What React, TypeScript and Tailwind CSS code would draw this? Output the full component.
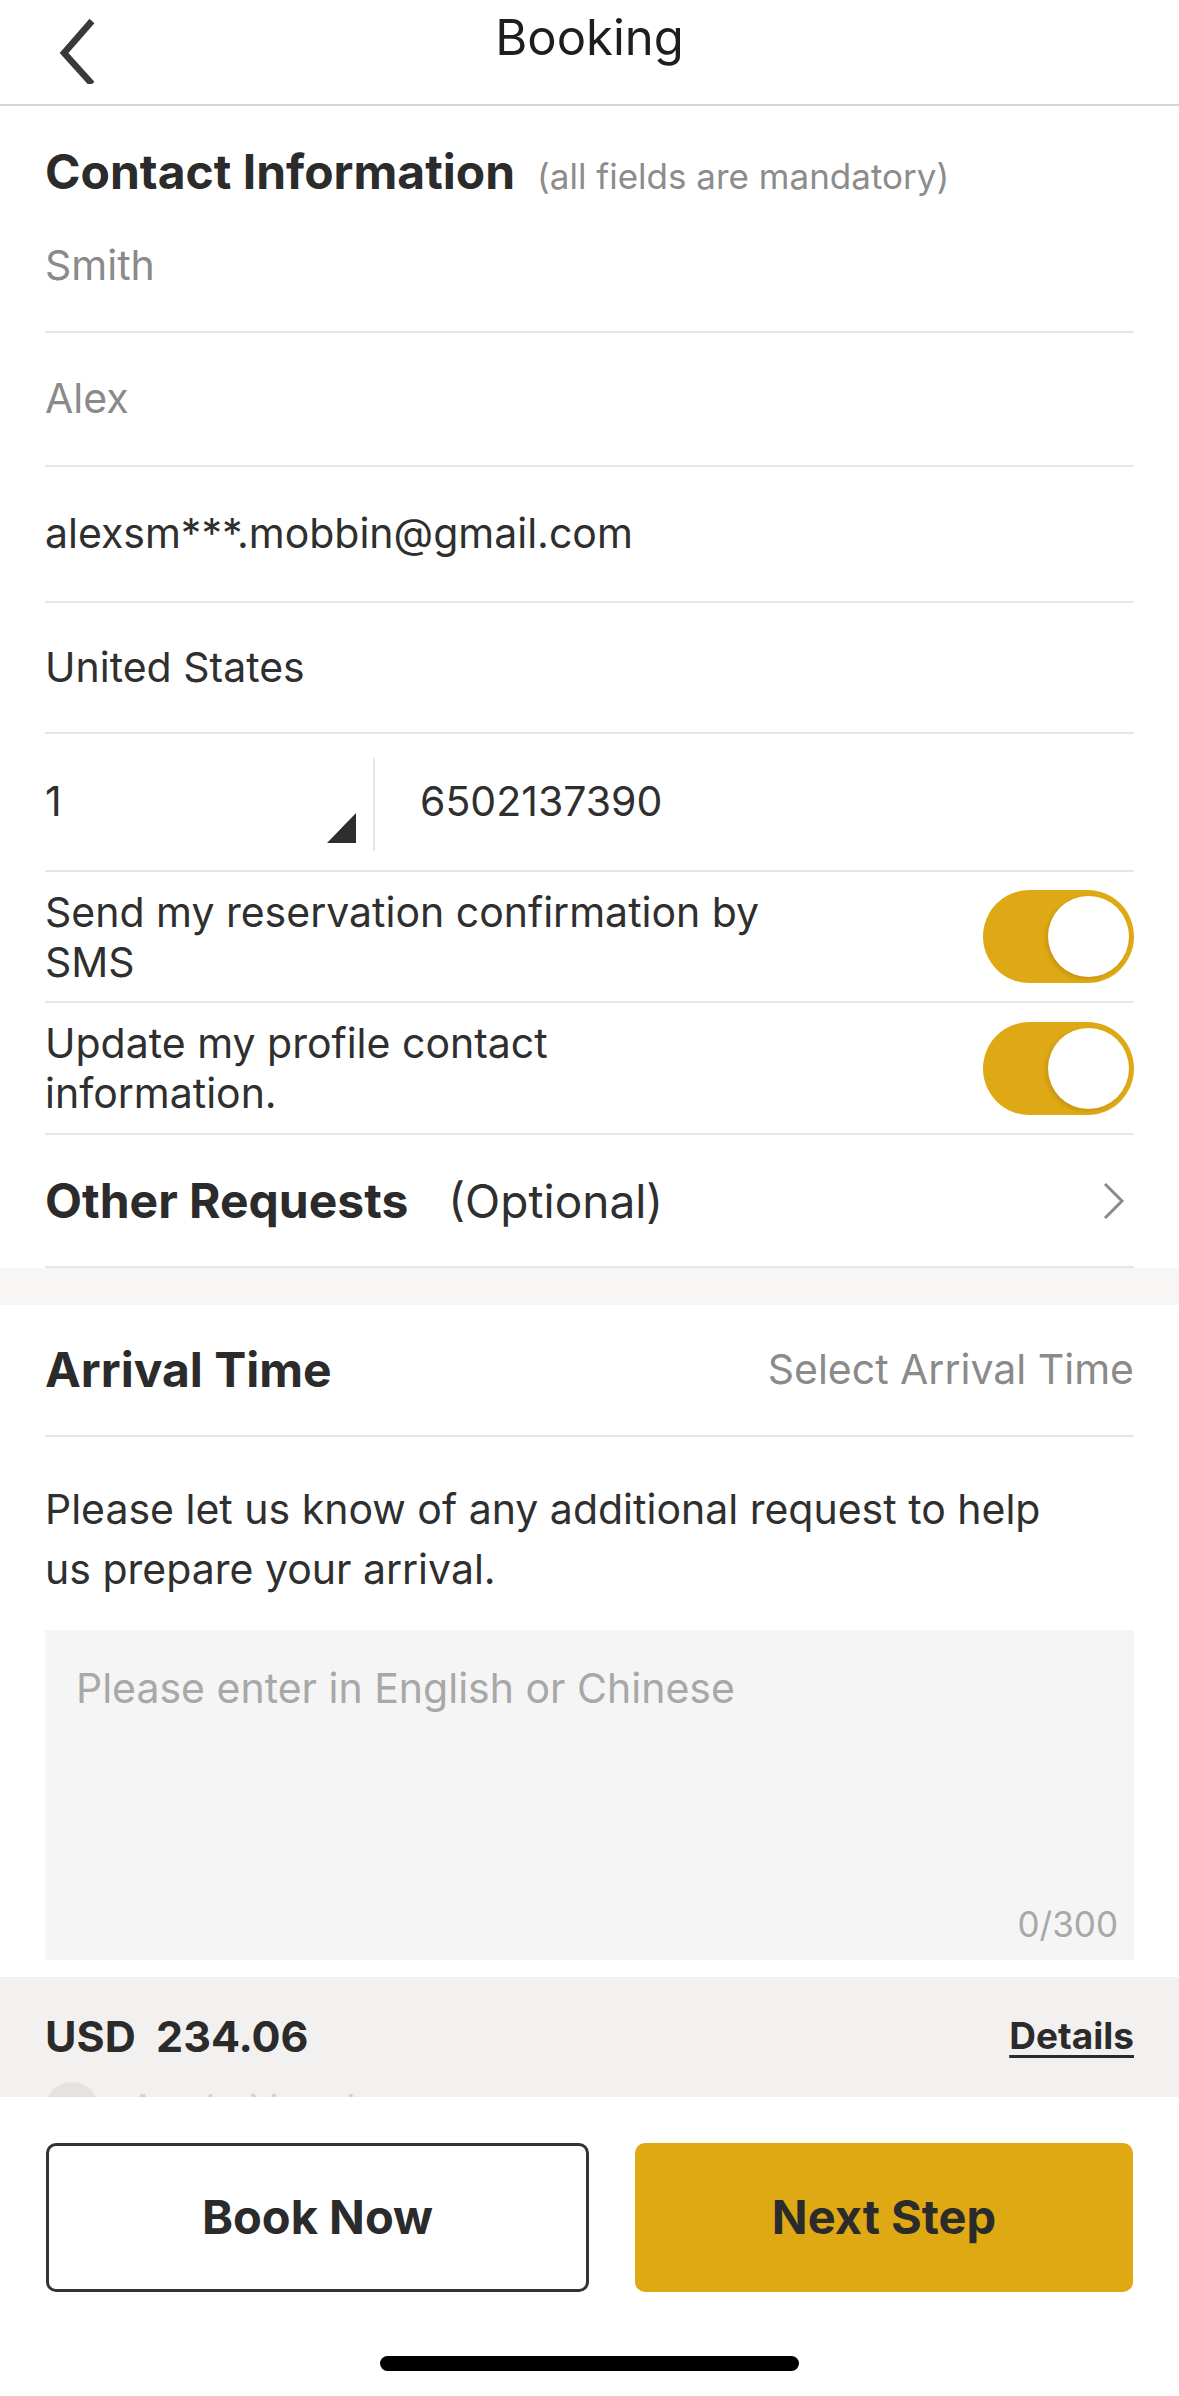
import React from "react";

const font = { fontFamily: "Inter, 'Noto Sans', sans-serif" };

function Toggle() {
  return (
    <div className="w-[151px] h-[93px] rounded-full bg-[#dea914] flex items-center justify-end pr-[5px] shrink-0">
      <div className="w-[81px] h-[81px] rounded-full bg-white shadow-[-2px_2px_4px_rgba(0,0,0,0.12)]" />
    </div>
  );
}

function FieldRow({ h, children, className = "" }: { h: string; children: React.ReactNode; className?: string }) {
  return (
    <div className={`${h} border-b-2 border-[#e6e6e6] flex items-center ${className}`}>{children}</div>
  );
}

export default function App() {
  return (
    <div className="w-[1179px] h-[2396px] bg-white text-[#333] overflow-hidden flex flex-col" style={font}>
      {/* Header */}
      <div className="h-[106px] border-b-2 border-[#d6d6d6] grid grid-cols-[1fr_auto_1fr] items-center shrink-0">
        <div className="pl-[56px] pb-[2px] flex items-center">
          <svg width="42" height="66" viewBox="0 0 42 66" fill="none">
            <path d="M36 3 L8 35 L36 66" stroke="#3a3a3a" strokeWidth="6.5" strokeLinejoin="miter" />
          </svg>
        </div>
        <div className="text-[49px] leading-none text-[#1e1e1e] pb-[30px]">Booking</div>
        <div />
      </div>

      {/* Contact info */}
      <div className="px-[45px] shrink-0">
        <div className="pt-[38px] h-[94px] flex items-baseline">
          <span className="text-[48px] leading-[56px] font-bold text-[#2b2b2b]">Contact Information</span>
          <span className="ml-[22px] text-[35px] text-[#8c8c8c]">(all fields are mandatory)</span>
        </div>
        <FieldRow h="h-[133px]">
          <span className="text-[41px] text-[#8a8a8a]">Smith</span>
        </FieldRow>
        <FieldRow h="h-[134px]">
          <span className="text-[41px] text-[#8a8a8a]">Alex</span>
        </FieldRow>
        <FieldRow h="h-[136px]">
          <span className="text-[41px] text-[#2f2f2f]">alexsm***.mobbin@gmail.com</span>
        </FieldRow>
        <FieldRow h="h-[131px]">
          <span className="text-[41px] text-[#2f2f2f]">United States</span>
        </FieldRow>
        <FieldRow h="h-[138px]" className="items-stretch">
          <div className="w-[328px] pr-[17px] flex items-center justify-between shrink-0">
            <span className="text-[41px] text-[#2f2f2f]">1</span>
            <svg width="29" height="30" viewBox="0 0 29 30" className="self-end mb-[27px]">
              <polygon points="29,0 29,30 0,30" fill="#2e2e2e" />
            </svg>
          </div>
          <div className="w-[2px] bg-[#e6e6e6] mt-[24px] mb-[19px]" />
          <div className="pl-[45px] flex items-center">
            <span className="text-[41px] text-[#2f2f2f]">6502137390</span>
          </div>
        </FieldRow>
        <FieldRow h="h-[131px]" className="justify-between">
          <span className="text-[41px] leading-[50px] text-[#2f2f2f]">
            Send my reservation confirmation by
            <br />
            SMS
          </span>
          <Toggle />
        </FieldRow>
        <FieldRow h="h-[132px]" className="justify-between">
          <span className="text-[41px] leading-[50px] text-[#2f2f2f]">
            Update my profile contact
            <br />
            information.
          </span>
          <Toggle />
        </FieldRow>
        <FieldRow h="h-[133px]" className="justify-between">
          <div className="flex items-baseline">
            <span className="text-[48px] font-bold text-[#2b2b2b]">Other Requests</span>
            <span className="ml-[40px] text-[46px] text-[#2f2f2f]">(Optional)</span>
          </div>
          <svg width="24" height="38" viewBox="0 0 24 38" fill="none" className="mr-[8px]">
            <path d="M3 2 L20 19 L3 36" stroke="#8a8a8a" strokeWidth="3" />
          </svg>
        </FieldRow>
      </div>

      {/* gray band */}
      <div className="h-[37px] bg-[#f7f6f5] shrink-0" />

      {/* Arrival */}
      <div className="px-[45px] shrink-0">
        <div className="h-[132px] border-b-2 border-[#e6e6e6] flex items-center justify-between">
          <span className="text-[48px] font-bold text-[#2b2b2b]">Arrival Time</span>
          <span className="text-[41px] text-[#8a8a8a]">Select Arrival Time</span>
        </div>
        <p className="pt-[42px] text-[41px] leading-[60px] text-[#2f2f2f]">
          Please let us know of any additional request to help
          <br />
          us prepare your arrival.
        </p>
        <div className="mt-[31px] h-[330px] bg-[#f5f5f5] flex flex-col justify-between pl-[31px] pr-[16px] pt-[28px] pb-[10px]">
          <span className="text-[41px] text-[#a8a8a8]">Please enter in English or Chinese</span>
          <span className="self-end text-[35px] text-[#a8a8a8]">0/300</span>
        </div>
      </div>

      <div className="h-[17px] shrink-0" />

      {/* price bar */}
      <div className="h-[120px] bg-[#f3f1f0] px-[45px] pt-[31px] overflow-hidden shrink-0">
        <div className="h-[56px] flex items-center justify-between">
          <span className="text-[43px] font-bold text-[#2b2b2b]">USD&nbsp;&nbsp;234.06</span>
          <span className="text-[37px] font-bold text-[#2b2b2b] underline underline-offset-[6px] decoration-[3px]">Details</span>
        </div>
        <div className="mt-[15px] flex items-center justify-between opacity-25">
          <div className="flex items-center gap-[30px]">
            <div className="w-[54px] h-[54px] rounded-full bg-[#bbbbbb]" />
            <span className="text-[40px] text-[#777]">Apple Voucher</span>
          </div>
          <span className="text-[40px] text-[#777]">›</span>
        </div>
      </div>

      {/* bottom */}
      <div className="flex-1 bg-white flex flex-col items-center">
        <div className="w-full px-[46px] pt-[46px] flex gap-[46px]">
          <div className="w-[543px] h-[149px] border-[3px] border-[#333] rounded-[10px] flex items-center justify-center">
            <span className="text-[47px] font-bold text-[#2b2b2b]">Book Now</span>
          </div>
          <div className="flex-1 h-[149px] bg-[#dfa914] rounded-[10px] flex items-center justify-center">
            <span className="text-[47px] font-bold text-[#2b2b2b]">Next Step</span>
          </div>
        </div>
        <div className="mt-[64px] w-[419px] h-[15px] rounded-full bg-black" />
      </div>
    </div>
  );
}
